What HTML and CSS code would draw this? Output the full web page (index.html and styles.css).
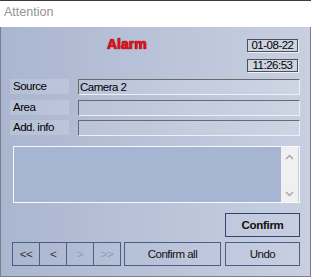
FILE: index.html
```html
<!DOCTYPE html>
<html>
<head>
<meta charset="utf-8">
<link rel="stylesheet" href="styles.css">
</head>
<body>
<div class="window">
  <div class="titlebar">Attention</div>
  <div class="body">
    <div class="header">
      <div class="alarm">Alarm</div>
      <div class="stamps">
        <div class="stamp">01-08-22</div>
        <div class="stamp">11:26:53</div>
      </div>
    </div>
    <div class="rows">
      <div class="row"><div class="label">Source</div><div class="field">Camera 2</div></div>
      <div class="row"><div class="label">Area</div><div class="field"></div></div>
      <div class="row"><div class="label">Add. info</div><div class="field"></div></div>
    </div>
    <div class="memo">
      <div class="memo-text"></div>
      <div class="scrollbar">
        <svg width="9" height="6" viewBox="0 0 9 6"><polyline points="1,5 4.5,1.5 8,5" fill="none" stroke="#a8a8a8" stroke-width="1.5"/></svg>
        <svg width="9" height="6" viewBox="0 0 9 6"><polyline points="1,1 4.5,4.5 8,1" fill="none" stroke="#a8a8a8" stroke-width="1.5"/></svg>
      </div>
    </div>
    <div class="confirm-row">
      <button class="btn btn-default">Confirm</button>
    </div>
    <div class="bottom-row">
      <div class="nav">
        <button class="btn nav-btn">&lt;&lt;</button>
        <button class="btn nav-btn">&lt;</button>
        <button class="btn nav-btn disabled">&gt;</button>
        <button class="btn nav-btn disabled">&gt;&gt;</button>
      </div>
      <button class="btn btn-all">Confirm all</button>
      <button class="btn btn-undo">Undo</button>
    </div>
  </div>
</div>
</body>
</html>
```

FILE: styles.css
```css
* { box-sizing: border-box; }
html, body { margin: 0; padding: 0; }
body { width: 311px; height: 277px; overflow: hidden; background: #fff; }

.window {
  width: 311px;
  height: 277px;
  display: flex;
  flex-direction: column;
  font-family: "Liberation Sans", Arial, sans-serif;
}

.titlebar {
  height: 27px;
  border-top: 1px solid #3e3a3c;
  background: #ffffff;
  color: #939393;
  font-size: 12.5px;
  line-height: 23px;
  padding-left: 4px;
}

.body {
  height: 250px;
  background: linear-gradient(to right, #aab6cf, #c8cfe1);
  border-left: 1px solid #7a7f8a;
  border-right: 1px solid #7a7f8a;
  border-bottom: 1px solid #7a7f8a;
  padding: 12px 10px 10px 9px;
  display: flex;
  flex-direction: column;
  font-size: 11.5px;
  letter-spacing: -0.5px;
  color: #000;
}

.header {
  display: flex;
  justify-content: space-between;
  height: 33px;
}

.alarm {
  margin-left: 97px;
  margin-top: -1px;
  font-size: 14px;
  font-weight: bold;
  line-height: 13px;
  letter-spacing: 0;
  color: #e5121b;
  text-shadow: 0 0 1px #8a0000, 0 0 1px #8a0000;
}

.stamps {
  display: flex;
  flex-direction: column;
  gap: 7px;
  margin-right: 2px;
}

.stamp {
  width: 51px;
  height: 13px;
  border: 1px solid #505050;
  box-shadow: 1px 1px 0 rgba(255,255,255,0.7);
  background: #ccd3e3;
  text-align: center;
  line-height: 11px;
}

.rows {
  margin-top: 7px;
  display: flex;
  flex-direction: column;
  gap: 4.5px;
}

.row {
  display: grid;
  grid-template-columns: 59px 1fr;
  column-gap: 9px;
  height: 16px;
}

.label {
  height: 15px;
  background: rgba(255,255,255,0.14);
  padding-left: 3px;
  line-height: 15px;
}

.field {
  height: 16px;
  border-top: 1px solid #6a6a6a;
  border-left: 1px solid #6a6a6a;
  border-bottom: 1px solid #eef0f5;
  border-right: 1px solid #eef0f5;
  background: rgba(255,255,255,0.12);
  padding-left: 1px;
  line-height: 14px;
}

.memo {
  margin-top: 10px;
  margin-left: 3px;
  height: 57px;
  border: 1px solid #f8f9fb;
  display: flex;
}

.memo-text {
  flex: 1;
  background: #a6b5d1;
}

.scrollbar {
  width: 17px;
  margin-right: 1px;
  background: #f0f0f0;
  display: flex;
  flex-direction: column;
  justify-content: space-between;
  align-items: center;
  padding: 7px 0 5px;
}

.scrollbar svg { display: block; }

.btn {
  font-family: "Liberation Sans", Arial, sans-serif;
  font-size: 11.5px;
  letter-spacing: -0.5px;
  height: 24px;
  background: transparent;
  border: 1px solid #4a5e86;
  color: #111;
  padding: 0;
  margin: 0;
  line-height: 22px;
}

.confirm-row {
  margin-top: 10px;
  display: flex;
  justify-content: flex-end;
}

.btn-default {
  width: 75px;
  font-weight: bold;
  letter-spacing: -0.3px;
  border-color: #2f4572;
}

.bottom-row {
  margin-top: 5px;
  margin-left: 2px;
  display: flex;
}

.nav { display: flex; }

.nav-btn {
  width: 28px;
  color: #333;
}

.nav-btn + .nav-btn { margin-left: -1px; }

.nav-btn.disabled { color: #8c99b5; }

.btn-all {
  width: 97px;
  margin-left: 3px;
}

.btn-undo {
  width: 75px;
  margin-left: 4px;
}
```
